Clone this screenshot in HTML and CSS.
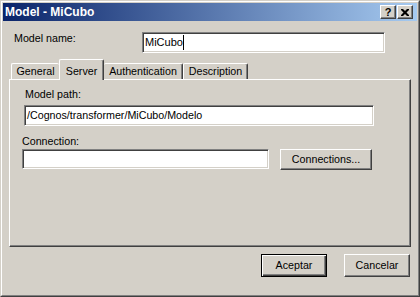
FILE: index.html
```html
<!DOCTYPE html>
<html>
<head>
<meta charset="utf-8">
<link rel="stylesheet" href="styles.css">
</head>
<body>
<div class="window">
  <div class="frame">
    <div class="titlebar">
      <span class="title">Model - MiCubo</span>
      <div class="caption-btns">
        <span class="cbtn help">?</span>
        <span class="cbtn close"><svg width="8" height="7" viewBox="0 0 8 7"><path d="M0 0h2l2 2 2-2h2v1l-2.5 2.5L8 6v1H6L4 5 2 7H0V6l2.5-2.5L0 1z" fill="#000"/></svg></span>
      </div>
    </div>
    <div class="content">
      <div class="name-row">
        <span class="name-label">Model name:</span>
        <div class="field name-field"><span>MiCubo</span><span class="caret"></span></div>
      </div>
      <div class="tabs">
        <div class="tab t-general">General</div>
        <div class="tab t-server active">Server</div>
        <div class="tab t-auth">Authentication</div>
        <div class="tab t-desc">Description</div>
      </div>
      <div class="panel">
        <div class="lbl lbl-path">Model path:</div>
        <div class="field path-field">/Cognos/transformer/MiCubo/Modelo</div>
        <div class="lbl lbl-conn">Connection:</div>
        <div class="conn-row">
          <div class="field conn-field"></div>
          <div class="btn conn-btn">Connections...</div>
        </div>
      </div>
      <div class="actions">
        <div class="btn default">Aceptar</div>
        <div class="btn">Cancelar</div>
      </div>
    </div>
  </div>
</div>
</body>
</html>
```

FILE: styles.css
```css
html, body {
  margin: 0;
  padding: 0;
  background: #d4d0c8;
}
body {
  font-family: "Liberation Sans", Arial, sans-serif;
  font-size: 10.7px;
  line-height: 13px;
  color: #000;
}
.window {
  width: 420px;
  height: 297px;
  box-sizing: border-box;
  border: 1px solid;
  border-color: #d4d0c8 #404040 #404040 #d4d0c8;
}
.frame {
  height: 100%;
  box-sizing: border-box;
  border: 1px solid;
  border-color: #fff #808080 #808080 #fff;
  padding: 1px;
  background: #d4d0c8;
}
.titlebar {
  height: 18px;
  background: linear-gradient(to right, #0a246a, #a6caf0);
  display: flex;
  align-items: center;
  justify-content: space-between;
  padding-left: 2px;
}
.title {
  color: #fff;
  font-weight: bold;
  font-size: 12px;
}
.caption-btns {
  display: flex;
  gap: 1px;
  margin-right: 4px;
}
.cbtn {
  width: 16px;
  height: 14px;
  box-sizing: border-box;
  background: #d4d0c8;
  border: 1px solid;
  border-color: #fff #404040 #404040 #fff;
  box-shadow: inset -1px -1px #808080;
  display: flex;
  align-items: center;
  justify-content: center;
  font-weight: bold;
  font-size: 11px;
  line-height: 11px;
}
.cbtn.close svg {
  display: block;
  margin-left: -1px;
}
.name-row {
  display: flex;
  align-items: flex-start;
  margin-top: 11px;
  padding-left: 11px;
}
.name-label {
  width: 128px;
}
.field {
  background: #fff;
  box-sizing: border-box;
  border: 1px solid;
  border-color: #808080 #fff #fff #808080;
  box-shadow: inset 1px 1px #404040, inset -1px -1px #d4d0c8;
  padding: 0 2px;
  display: flex;
  align-items: center;
  white-space: nowrap;
}
.name-field {
  width: 243px;
  height: 21px;
  font-size: 11px;
}
.caret {
  display: inline-block;
  width: 1px;
  height: 15px;
  background: #000;
}
.tabs {
  display: flex;
  align-items: flex-end;
  height: 20px;
  margin-top: 6px;
  margin-left: 6px;
  padding-left: 2px;
}
.tab {
  height: 16px;
  box-sizing: border-box;
  border-top: 1px solid #fff;
  border-left: 1px solid #fff;
  border-right: 1px solid #404040;
  box-shadow: inset -1px 0 #808080;
  border-radius: 2px 2px 0 0;
  text-align: center;
  line-height: 14px;
  background: #d4d0c8;
}
.t-general {
  width: 48px;
  border-right: none;
  box-shadow: none;
}
.active {
  width: 45px;
  height: 21px;
  margin-bottom: -1px;
  padding-top: 4px;
  position: relative;
  z-index: 1;
}
.t-auth {
  width: 79px;
  border-left: none;
}
.t-desc {
  width: 65px;
}
.panel {
  margin-left: 6px;
  width: 402px;
  height: 168px;
  box-sizing: border-box;
  border-top: 1px solid #fff;
  border-left: 1px solid #fff;
  border-right: 1px solid #404040;
  border-bottom: 1px solid #404040;
  box-shadow: inset -1px -1px #808080;
  padding: 8px 0 0 12px;
}
.lbl-path {
  margin-left: 3px;
}
.path-field {
  margin-top: 4px;
  margin-left: 2px;
  width: 350px;
  height: 21px;
}
.lbl-conn {
  margin-top: 9px;
}
.conn-row {
  display: flex;
  align-items: flex-start;
  gap: 11px;
  margin-top: 1px;
}
.conn-field {
  width: 247px;
  height: 20px;
}
.btn {
  box-sizing: border-box;
  background: #d4d0c8;
  border: 1px solid;
  border-color: #fff #404040 #404040 #fff;
  box-shadow: inset -1px -1px #808080;
  display: flex;
  align-items: center;
  justify-content: center;
  white-space: nowrap;
}
.conn-btn {
  width: 92px;
  height: 21px;
}
.actions {
  display: flex;
  justify-content: flex-end;
  gap: 17px;
  margin-top: 7px;
  padding-right: 7px;
}
.actions .btn {
  width: 66px;
  height: 23px;
}
.actions .default {
  border: 1px solid #000;
  box-shadow: inset 1px 1px #fff, inset -1px -1px #404040, inset -2px -2px #808080;
}
```
